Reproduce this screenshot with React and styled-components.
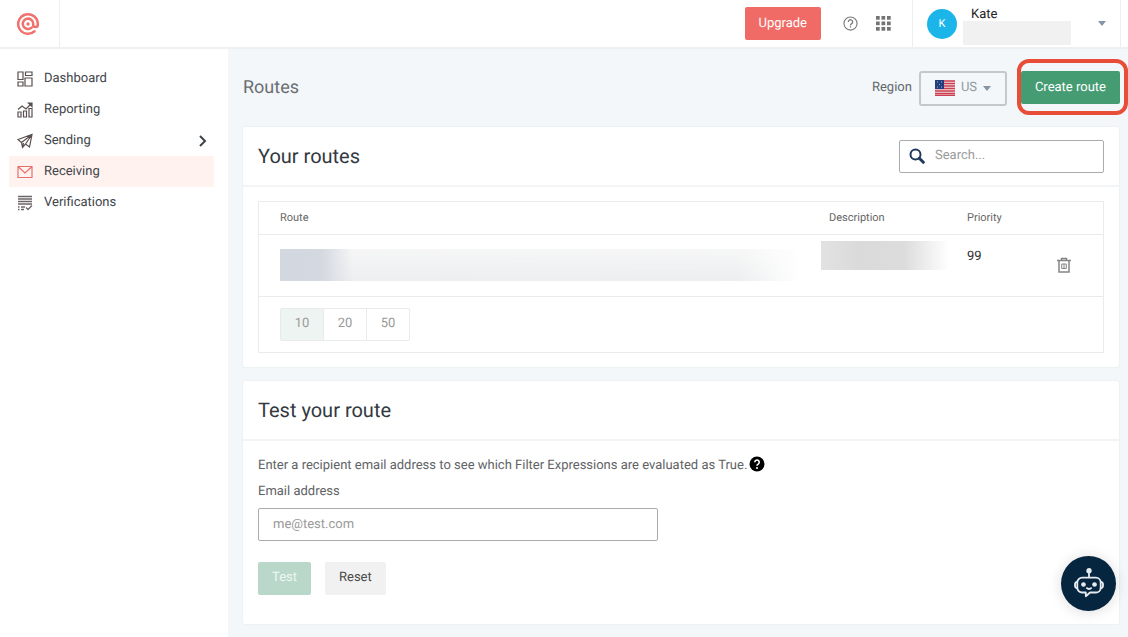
import { useState } from 'react';
import styled, { createGlobalStyle, css } from 'styled-components';

const GlobalStyle = createGlobalStyle`
  * {
    box-sizing: border-box;
  }

  body {
    margin: 0;
    background: #f3f7fa;
    color: #4a4f54;
    font-family: Roboto, 'Liberation Sans', sans-serif;
    font-size: 13px;
    line-height: 20px;
    text-rendering: geometricPrecision;
  }

  button,
  input,
  select {
    font: inherit;
    text-rendering: inherit;
  }
`;

// Page shell
const Shell = styled.div`
  display: flex;
  flex-direction: column;
  min-height: 100vh;
`;

const Body = styled.div`
  display: flex;
  flex: 1;
`;

const Main = styled.main`
  flex: 1;
  min-width: 0;
  padding: 0 9px 0 15px;
`;

// Top bar
const TopBar = styled.header`
  display: flex;
  align-items: stretch;
  height: 49px;
  background: #fff;
  border-bottom: 2px solid #eef0f1;
`;

const LogoLink = styled.a`
  display: flex;
  align-items: center;
  width: 60px;
  padding-left: 16px;
  border-right: 1px solid #eceeef;
`;

const TopActions = styled.div`
  display: flex;
  align-items: center;
  margin-left: auto;
  padding-right: 21px;
`;

const IconButton = styled.button`
  display: flex;
  margin: 0 0 0 ${(props) => props.$gap || 0}px;
  padding: 0;
  border: 0;
  background: none;
  cursor: pointer;
`;

const UserMenu = styled.button`
  display: flex;
  align-items: center;
  width: 209px;
  margin-right: 7px;
  padding: 0 14px;
  border: solid #eceeef;
  border-width: 0 1px;
  background: none;
  text-align: left;
  cursor: pointer;
`;

const Avatar = styled.span`
  display: flex;
  align-items: center;
  justify-content: center;
  width: 30px;
  height: 30px;
  border-radius: 50%;
  background: #1cb5ea;
  color: #fff;
  font-size: 11px;
`;

const UserInfo = styled.span`
  display: flex;
  flex-direction: column;
  align-self: flex-start;
  width: 108px;
  margin-left: 6px;
  padding-top: 9px;
`;

const UserName = styled.span`
  padding-left: 8px;
  color: #222;
  line-height: 12px;
`;

const Caret = styled.span`
  margin-left: auto;
  border: 4px solid transparent;
  border-top: 5px solid #8496a5;
  border-bottom: 0;
`;

// Hidden values
const Redacted = styled.span`
  display: block;
  width: ${(props) => props.$width || '100%'};
  height: ${(props) => props.$height}px;
  background: ${(props) => props.$fill};
`;

// Side navigation
const Sidebar = styled.nav`
  flex: none;
  width: 228px;
  padding: 14px 14px 14px 9px;
  background: #fff;
`;

const NavLink = styled.a`
  display: flex;
  align-items: center;
  height: 31px;
  padding: 0 6px 0 8px;
  border-radius: 2px;
  color: #3f454a;
  text-decoration: none;
  background: ${(props) => (props.$active ? '#fff2ef' : 'none')};

  svg:first-child {
    margin-right: 11px;
  }

  svg:nth-child(n + 2) {
    margin-left: auto;
  }
`;

// Buttons
const variants = {
  danger: css`
    background: #f06b66;
    color: #fff;
  `,
  primary: css`
    background: #459c73;
    color: #fff;
  `,
  neutral: css`
    background: #f1f1f1;
    color: #4a4a4a;
  `,
};

const Button = styled.button`
  height: 33px;
  padding: 0 14px;
  border: 0;
  border-radius: 2px;
  cursor: pointer;
  ${(props) => variants[props.$variant]}

  &:disabled {
    background: #b9d8c9;
    color: #eef7f2;
    cursor: default;
  }
`;

const Highlight = styled.div`
  margin: 0 -9px 2px 10px;
  padding: 8px 4px 7px 0;
  border: 4px solid #e84d38;
  border-radius: 12px;
  line-height: 0;
`;

// Page heading
const PageHeader = styled.div`
  display: flex;
  align-items: center;
  height: 78px;
`;

const PageTitle = styled.h1`
  margin: 0 auto 0 0;
  color: #6a6e71;
  font-size: 18px;
  font-weight: 400;
  line-height: 24px;
`;

const RegionLabel = styled.label`
  margin-right: 7px;
  color: #62676b;
`;

const RegionBox = styled.div`
  display: flex;
  align-items: center;
  width: 88px;
  height: 35px;
  padding: 0 14px;
  border: 2px solid #c4c8cb;
  border-radius: 3px;
`;

const RegionSelect = styled.select`
  width: 20px;
  margin-left: 6px;
  padding: 0;
  border: 0;
  appearance: none;
  background: none;
  color: #8d9aa5;
`;

// Cards
const Card = styled.section`
  margin-bottom: 14px;
  border-radius: 2px;
  background: #fff;
  box-shadow: 0 0 2px #dde3e6;
`;

const CardHeader = styled.div`
  display: flex;
  align-items: center;
  justify-content: space-between;
  height: 60px;
  padding: 0 15px;
  border-bottom: 2px solid #f2f4f5;
`;

const CardTitle = styled.h2`
  margin: 0;
  color: #33393f;
  font-size: 20px;
  font-weight: 400;
  line-height: 24px;
`;

const SearchBox = styled.label`
  display: flex;
  align-items: center;
  width: 205px;
  height: 33px;
  padding: 0 9px;
  border: 1px solid #a9acae;
  border-radius: 2px;
`;

const SearchInput = styled.input`
  flex: 1;
  min-width: 0;
  margin-left: 10px;
  padding: 0;
  border: 0;
  outline: 0;

  &::placeholder {
    color: #9b9b9b;
  }
`;

const TablePanel = styled.div`
  padding: 14px 15px;
`;

const RoutesFrame = styled.div`
  border: 1px solid #e9ebec;
`;

const RoutesTable = styled.table`
  width: 100%;
  border-collapse: collapse;
  table-layout: fixed;

  th {
    height: 32px;
    padding: 0 0 0 21px;
    color: #666;
    font-size: 11px;
    font-weight: 400;
    text-align: left;
  }

  th:nth-child(n + 2) {
    padding-left: 8px;
  }

  tr {
    border-bottom: 1px solid #e9ebec;
  }

  td {
    height: 62px;
    padding: 0 0 0 21px;
    vertical-align: middle;
  }

  td:nth-child(2) {
    padding: 6px 0 0;
    vertical-align: top;
  }

  td:nth-child(3) {
    padding: 12px 0 0 8px;
    color: #333;
    vertical-align: top;
  }

  td:nth-child(4) {
    padding-left: 8px;
  }
`;

const Pager = styled.div`
  display: flex;
  padding: 11px 21px;
`;

const PageSize = styled.button`
  width: 44px;
  height: 33px;
  margin-right: -1px;
  padding: 0;
  border: 1px solid #e8ebea;
  background: ${(props) => (props.$active ? '#eef4f1' : '#fff')};
  color: #999;
  cursor: pointer;

  &:first-child {
    border-radius: 2px 0 0 2px;
  }

  &:last-child {
    border-radius: 0 2px 2px 0;
  }
`;

// Test form
const TestForm = styled.form`
  padding: 15px 15px 29px;
`;

const Hint = styled.p`
  display: flex;
  align-items: flex-start;
  gap: 2px;
  margin: 0 0 6px;
  color: #5f6366;
`;

const FieldLabel = styled.label`
  display: block;
  margin-bottom: 6px;
  color: #5f6366;
`;

const EmailInput = styled.input`
  display: block;
  width: 400px;
  max-width: 100%;
  height: 33px;
  padding: 0 14px;
  border: 1px solid #a9acae;
  border-radius: 2px;

  &::placeholder {
    color: #999;
  }
`;

const FormActions = styled.div`
  display: flex;
  gap: 14px;
  margin-top: 21px;
`;

const ChatButton = styled.button`
  position: fixed;
  right: 12px;
  bottom: 26px;
  display: flex;
  align-items: center;
  justify-content: center;
  width: 55px;
  height: 55px;
  padding: 0;
  border: 0;
  border-radius: 50%;
  background: #06253f;
  box-shadow: 0 1px 14px rgba(0, 0, 0, 0.14);
  cursor: pointer;
`;

// Icons
const Line = ({ size = 16, color = '#5a4f51', width = 1.2, children }) => (
  <svg
    width={size}
    height={size}
    viewBox="0 0 16 16"
    fill="none"
    stroke={color}
    strokeWidth={width}
    aria-hidden="true"
  >
    {children}
  </svg>
);

const DashboardIcon = () => (
  <Line>
    <path d="M1 1h5v7.500H1zM8.500 1H15v3.500H8.500zM1 11h5v4H1zM8 7h7v8H8z" />
  </Line>
);

const ReportingIcon = () => (
  <Line>
    <path d="M1 10h3v5H1zM6.500 9h3v6h-3zM12 6.500h3V15h-3zM1 7.500 5 4l4 3 5-5" />
    <path d="M11.500 1h3.500v3.500z" fill="#5a4f51" />
  </Line>
);

const SendingIcon = () => (
  <Line>
    <path d="M1 6.500 15 1.500l-2.500 12.500-4-3-3 3.500-1-5zM4.500 9.500 15 1.500 8.500 11M5.500 14.500l1-4.500" />
  </Line>
);

const ReceivingIcon = () => (
  <Line color="#e8706c">
    <path d="M1 2.500h14v11H1zM1 2.500l7 6.500 7-6.500" />
  </Line>
);

const VerificationsIcon = () => (
  <Line color="#6b6668">
    <path d="M1 1.500h14M1 4h14M1 6.500h14M1 9h14" strokeWidth="1.500" />
    <path d="M1 12h1.500M4 12h4M1 14.500h1.500M4 14.500h3M9 12.500l2 2L15 10.500" strokeWidth="1.300" />
  </Line>
);

const ChevronIcon = () => (
  <svg width="10" height="14" viewBox="0 0 10 14" aria-hidden="true">
    <path d="M2 2l5 5-5 5" fill="none" stroke="#3e4348" strokeWidth="2" />
  </svg>
);

const LogoIcon = () => (
  <svg
    width="24"
    height="24"
    viewBox="0 0 24 24"
    fill="none"
    stroke="#f0716d"
    strokeWidth="2.500"
    strokeLinecap="round"
    aria-hidden="true"
  >
    <path d="M18.500 19.300A9.800 9.800 0 1 1 21.800 12v.8a2.300 2.300 0 0 1-4.600 0V12A5.200 5.200 0 1 0 15.600 15.600" />
    <circle cx="12" cy="12" r="1.700" fill="#f0716d" stroke="none" />
  </svg>
);

const HelpIcon = () => (
  <Line size={15} color="#7a7a7a" width={1.2}>
    <circle cx="8" cy="8" r="7" />
    <path d="M5.700 6.300a2.300 2.300 0 1 1 3.600 1.900C8.300 8.800 8 9 8 10M8 11v1.300" strokeWidth="1.400" />
  </Line>
);

const AppsIcon = () => (
  <svg width="15" height="15" viewBox="0 0 15 15" fill="#747474" aria-hidden="true">
    {[0, 5.5, 11].map((y) =>
      [0, 5.5, 11].map((x) => <rect key={`${x}-${y}`} x={x} y={y} width="3.700" height="3.700" />)
    )}
  </svg>
);

const FlagIcon = () => (
  <svg width="20" height="16" viewBox="0 0 20 16" aria-hidden="true">
    <rect width="20" height="16" rx="1" fill="#f3dcdf" />
    <path d="M0 1h20M0 3.500h20M0 6h20M0 8.500h20M0 11h20M0 13.500h20M0 15.500h20" stroke="#cb4051" strokeWidth="1.300" />
    <rect width="9" height="9" fill="#233e7d" />
    <path d="M2 2h1M6 2h1M4 4.500h1M2 7h1M6 7h1" stroke="#a9b8d8" />
  </svg>
);

const SearchIcon = () => (
  <svg width="16" height="16" viewBox="0 0 16 16" fill="none" stroke="#1f3a5a" aria-hidden="true">
    <circle cx="6.500" cy="6.500" r="5" strokeWidth="2" />
    <path d="M10.300 10.300 14.300 14.300" strokeWidth="3" strokeLinecap="round" />
  </svg>
);

const TrashIcon = () => (
  <Line color="#858585" width={1.5}>
    <path d="M1 3.500h14M5.500 3V1.500h5V3M3 3.500V15h10V3.500" />
    <path d="M5.700 7h4.600v4.500H5.700zM8 7v4.500" strokeWidth="1" />
  </Line>
);

const QuestionBadge = () => (
  <svg width="16" height="16" viewBox="0 0 16 16" aria-hidden="true">
    <circle cx="8" cy="8" r="7.500" fill="#000" />
    <path d="M5.800 6.300a2.200 2.200 0 1 1 3.400 1.800C8.300 8.700 8 8.900 8 9.800" fill="none" stroke="#fff" strokeWidth="1.600" />
    <circle cx="8" cy="12" r="1" fill="#fff" />
  </svg>
);

const RobotIcon = () => (
  <svg
    width="34"
    height="34"
    viewBox="0 0 32 32"
    fill="none"
    stroke="#e6ebef"
    strokeWidth="1.700"
    strokeLinejoin="round"
    aria-hidden="true"
  >
    <circle cx="16" cy="3.500" r="1.700" fill="#e6ebef" />
    <path d="M16 5v5" />
    <path d="M9.500 10h13a4.500 4.500 0 0 1 4.500 4.500v5a4.500 4.500 0 0 1-4.500 4.500H17l-4 3.500V24H9.500A4.500 4.500 0 0 1 5 19.500v-5A4.500 4.500 0 0 1 9.500 10z" />
    <path d="M5 14c-3 0-3 6 0 6M27 14c3 0 3 6 0 6M13.500 19.500c1.500 1.500 3.500 1.500 5 0" />
    <circle cx="10.800" cy="16.500" r="2.200" fill="#e6ebef" stroke="none" />
    <circle cx="21.200" cy="16.500" r="2.200" fill="#e6ebef" stroke="none" />
  </svg>
);

const navItems = [
  { label: 'Dashboard', Icon: DashboardIcon },
  { label: 'Reporting', Icon: ReportingIcon },
  { label: 'Sending', Icon: SendingIcon, expandable: true },
  { label: 'Receiving', Icon: ReceivingIcon },
  { label: 'Verifications', Icon: VerificationsIcon },
];

const routeFill =
  'linear-gradient(90deg, #d2d7e0 0, #d4d9e0 8%, rgba(240, 241, 242, 0.3) 14%, rgba(240, 241, 242, 0.2) 88%, #fff 100%), linear-gradient(#f8f8f8, #ebedef)';
const descriptionFill =
  'linear-gradient(90deg, #e2e2e2, #dadada 30%, #dcdcdc 65%, #fff 100%)';

const App = () => {
  const [pageSize, setPageSize] = useState(10);
  const [search, setSearch] = useState('');
  const [email, setEmail] = useState('');

  return (
    <Shell>
      <GlobalStyle />
      <TopBar>
        <LogoLink href="#" aria-label="Home">
          <LogoIcon />
        </LogoLink>
        <TopActions>
          <Button type="button" $variant="danger">
            Upgrade
          </Button>
          <IconButton type="button" aria-label="Help" $gap={22}>
            <HelpIcon />
          </IconButton>
          <IconButton type="button" aria-label="Apps" $gap={18}>
            <AppsIcon />
          </IconButton>
        </TopActions>
        <UserMenu type="button">
          <Avatar>K</Avatar>
          <UserInfo>
            <UserName>Kate</UserName>
            <Redacted $height={24} $fill="#f1f1f1" />
          </UserInfo>
          <Caret />
        </UserMenu>
      </TopBar>

      <Body>
        <Sidebar>
          {navItems.map(({ label, Icon, expandable }) => (
            <NavLink key={label} href="#" $active={label === 'Receiving'}>
              <Icon />
              {label}
              {expandable && <ChevronIcon />}
            </NavLink>
          ))}
        </Sidebar>

        <Main>
          <PageHeader>
            <PageTitle>Routes</PageTitle>
            <RegionLabel htmlFor="region">Region</RegionLabel>
            <RegionBox>
              <FlagIcon />
              <RegionSelect id="region" defaultValue="US">
                <option>US</option>
                <option>EU</option>
              </RegionSelect>
              <Caret />
            </RegionBox>
            <Highlight>
              <Button type="button" $variant="primary">
                Create route
              </Button>
            </Highlight>
          </PageHeader>

          <Card>
            <CardHeader>
              <CardTitle>Your routes</CardTitle>
              <SearchBox>
                <SearchIcon />
                <SearchInput
                  type="text"
                  aria-label="Search routes"
                  placeholder="Search..."
                  value={search}
                  onChange={(e) => setSearch(e.target.value)}
                />
              </SearchBox>
            </CardHeader>
            <TablePanel>
              <RoutesFrame>
                <RoutesTable>
                  <colgroup>
                    <col />
                    <col width="138" />
                    <col width="89" />
                    <col width="55" />
                  </colgroup>
                  <thead>
                    <tr>
                      <th>Route</th>
                      <th>Description</th>
                      <th>Priority</th>
                      <th aria-label="Actions" />
                    </tr>
                  </thead>
                  <tbody>
                    <tr>
                      <td>
                        <Redacted $width="520px" $height={32} $fill={routeFill} />
                      </td>
                      <td>
                        <Redacted $width="128px" $height={29} $fill={descriptionFill} />
                      </td>
                      <td>99</td>
                      <td>
                        <IconButton type="button" aria-label="Delete route">
                          <TrashIcon />
                        </IconButton>
                      </td>
                    </tr>
                  </tbody>
                </RoutesTable>
                <Pager>
                  {[10, 20, 50].map((size) => (
                    <PageSize
                      key={size}
                      type="button"
                      $active={size === pageSize}
                      onClick={() => setPageSize(size)}
                    >
                      {size}
                    </PageSize>
                  ))}
                </Pager>
              </RoutesFrame>
            </TablePanel>
          </Card>

          <Card>
            <CardHeader>
              <CardTitle>Test your route</CardTitle>
            </CardHeader>
            <TestForm onSubmit={(e) => e.preventDefault()}>
              <Hint>
                Enter a recipient email address to see which Filter Expressions are evaluated as True.
                <QuestionBadge />
              </Hint>
              <FieldLabel htmlFor="email">Email address</FieldLabel>
              <EmailInput
                id="email"
                type="email"
                placeholder="me@test.com"
                value={email}
                onChange={(e) => setEmail(e.target.value)}
              />
              <FormActions>
                <Button type="submit" $variant="primary" disabled={!email}>
                  Test
                </Button>
                <Button type="button" $variant="neutral" onClick={() => setEmail('')}>
                  Reset
                </Button>
              </FormActions>
            </TestForm>
          </Card>
        </Main>
      </Body>

      <ChatButton type="button" aria-label="Open chat">
        <RobotIcon />
      </ChatButton>
    </Shell>
  );
};

export default App;
